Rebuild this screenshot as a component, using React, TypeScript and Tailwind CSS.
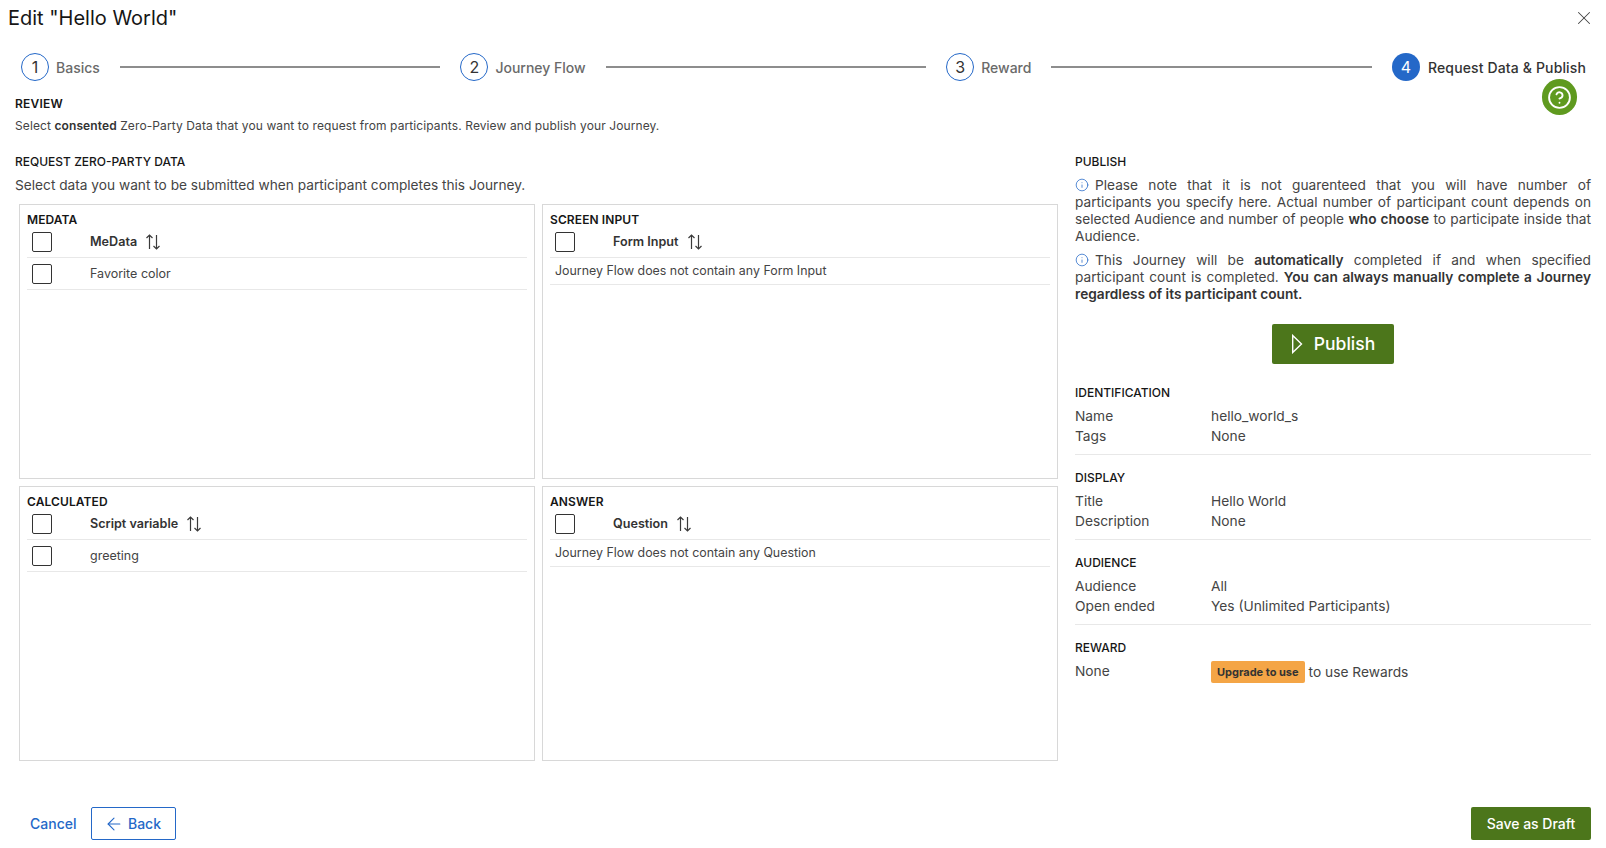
import React from "react";
import { ArrowLeft, CircleHelp, Info, X } from "lucide-react";

function Sort() {
  return (
    <svg width="16" height="18" viewBox="0 0 16 18" fill="none" stroke="#3a3a3a" strokeWidth="1.2" className="ml-2">
      <path d="M4.5 16V2M1.5 5l3-3 3 3" />
      <path d="M11.5 2v14M8.5 13l3 3 3-3" />
    </svg>
  );
}

function Step({ n, label, active }: { n: number; label: string; active?: boolean }) {
  return (
    <div className="flex items-center shrink-0">
      <div
        className={
          active
            ? "w-[28px] h-[28px] rounded-full bg-[#2468c8] text-white flex items-center justify-center text-[16px]"
            : "w-[28px] h-[28px] rounded-full border border-[#2468c8] text-[#333] flex items-center justify-center text-[16px]"
        }
      >
        {n}
      </div>
      <span
        className={
          active
            ? "ml-[8px] text-[14px] font-medium text-[#333] tracking-[0.14px]"
            : "ml-[7px] text-[14px] font-medium text-[#6a6a6a]"
        }
      >
        {label}
      </span>
    </div>
  );
}

function Box() {
  return <div className="w-[20px] h-[20px] border border-[#333] rounded-[2px] bg-white shrink-0" />;
}

function Panel({ title, col, row, empty }: { title: string; col: string; row?: string; empty?: string }) {
  return (
    <div className="border border-[#d8d8d8] h-[275px] px-[7px] pt-[7px]">
      <div className="text-[12px] leading-[15px] font-semibold text-[#161616] tracking-[0.1px]">{title}</div>
      <div className="flex items-center h-[31px] border-b border-[#e8e8e8] pl-[5px]">
        <Box />
        <div className="ml-[38px] flex items-center text-[12.6px] font-semibold text-[#333]">
          {col}
          <Sort />
        </div>
      </div>
      {row ? (
        <div className="flex items-center h-[32px] border-b border-[#e8e8e8] pl-[5px]">
          <Box />
          <div className="ml-[38px] pt-[2px] text-[12.5px] text-[#444]">{row}</div>
        </div>
      ) : (
        <div className="flex items-center h-[27px] border-b border-[#e8e8e8] pl-[5px] text-[12.4px] text-[#444]">{empty}</div>
      )}
    </div>
  );
}

function Heading({ children }: { children: React.ReactNode }) {
  return <div className="text-[12px] leading-[16px] font-medium text-[#161616]">{children}</div>;
}

function Row({ k, v }: { k: string; v: string }) {
  return (
    <div className="flex h-[20px] items-center text-[13.75px] text-[#444]">
      <div className="w-[136px]">{k}</div>
      <div>{v}</div>
    </div>
  );
}

export default function App() {
  return (
    <div className="relative w-[1606px] h-[848px] bg-white overflow-hidden text-[#333] font-['Inter',sans-serif]">
      <div className="flex items-center justify-between pl-[8px] pr-[11px] h-[36px]">
        <h1 className="text-[20px] leading-[26px] text-[#161616]">Edit "Hello World"</h1>
        <X size={22} strokeWidth={1.1} className="text-[#444]" />
      </div>

      <div className="flex items-center pl-[21px] pr-[20px] mt-[16px] h-[30px]">
        <Step n={1} label="Basics" />
        <div className="flex-1 h-[2px] bg-[#8d8d8d] mx-[20px]" />
        <Step n={2} label="Journey Flow" />
        <div className="flex-1 h-[2px] bg-[#8d8d8d] mx-[20px]" />
        <Step n={3} label="Reward" />
        <div className="flex-1 h-[2px] bg-[#8d8d8d] mx-[20px]" />
        <Step n={4} label="Request Data & Publish" active />
      </div>

      <div className="absolute left-[1542px] top-[79px] w-[35px] h-[36px] rounded-full bg-[#5f9a1f] flex items-center justify-center">
        <CircleHelp size={25} strokeWidth={1.8} className="text-white" />
      </div>

      <div className="pl-[15px] mt-[14px]">
        <div className="text-[12px] leading-[16px] font-semibold text-[#161616] tracking-[0.2px]">REVIEW</div>
        <p className="mt-[6px] text-[12px] leading-[16px] text-[#444] tracking-[0.1px]">
          Select <b className="font-semibold text-[#333]">consented</b> Zero-Party Data that you want to request from participants. Review and publish your Journey.
        </p>
      </div>

      <div className="flex pl-[15px] pr-[15px] mt-[20px]">
        <div className="w-[1043px] shrink-0">
          <Heading>REQUEST ZERO-PARTY DATA</Heading>
          <p className="mt-[6px] text-[13.7px] leading-[18px] text-[#444]">Select data you want to be submitted when participant completes this Journey.</p>
          <div className="ml-[4px] mt-[10px] grid grid-cols-[516px_516px] gap-x-[7px] gap-y-[7px]">
            <Panel title="MEDATA" col="MeData" row="Favorite color" />
            <Panel title="SCREEN INPUT" col="Form Input" empty="Journey Flow does not contain any Form Input" />
            <Panel title="CALCULATED" col="Script variable" row="greeting" />
            <Panel title="ANSWER" col="Question" empty="Journey Flow does not contain any Question" />
          </div>
        </div>

        <div className="ml-[17px] flex-1">
          <Heading>PUBLISH</Heading>
          <p className="mt-[7px] text-[13.7px] leading-[17px] text-[#444] text-justify">
            <Info size={14} strokeWidth={1.3} className="inline-block text-[#2468c8] mr-[6px] -mt-[3px]" />
            Please note that it is not guarenteed that you will have number of participants you specify here. Actual number of participant count depends on selected Audience and number of people <b className="font-semibold text-[#333]">who choose</b> to participate inside that Audience.
          </p>
          <p className="mt-[7px] text-[13.7px] leading-[17px] text-[#444] text-justify">
            <Info size={14} strokeWidth={1.3} className="inline-block text-[#2468c8] mr-[6px] -mt-[3px]" />
            This Journey will be <b className="font-semibold text-[#333]">automatically</b> completed if and when specified participant count is completed. <b className="font-semibold text-[#333]">You can always manually complete a Journey regardless of its participant count.</b>
          </p>
          <div className="flex justify-center mt-[21px]">
            <button className="w-[122px] h-[40px] bg-[#4c761b] rounded-[2px] text-white text-[17.5px] font-medium flex items-center justify-center">
              <svg width="12" height="20" viewBox="0 0 12 20" fill="none" stroke="#fff" strokeWidth="1.4" className="mr-[11px]">
                <path d="M1.7 1.5 10.5 10l-8.8 8.5z" />
              </svg>
              Publish
            </button>
          </div>

          <div className="mt-[21px]"><Heading>IDENTIFICATION</Heading></div>
          <div className="mt-[5px]">
            <Row k="Name" v="hello_world_s" />
            <Row k="Tags" v="None" />
          </div>
          <div className="h-px bg-[#e8e8e8] mt-[8px]" />

          <div className="mt-[15px]"><Heading>DISPLAY</Heading></div>
          <div className="mt-[5px]">
            <Row k="Title" v="Hello World" />
            <Row k="Description" v="None" />
          </div>
          <div className="h-px bg-[#e8e8e8] mt-[8px]" />

          <div className="mt-[15px]"><Heading>AUDIENCE</Heading></div>
          <div className="mt-[5px]">
            <Row k="Audience" v="All" />
            <Row k="Open ended" v="Yes (Unlimited Participants)" />
          </div>
          <div className="h-px bg-[#e8e8e8] mt-[8px]" />

          <div className="mt-[15px]"><Heading>REWARD</Heading></div>
          <div className="flex mt-[5px] text-[13.75px] text-[#444]">
            <div className="w-[136px] leading-[20px]">None</div>
            <div className="flex items-center">
              <span className="h-[22px] px-[6px] flex items-center bg-[#f4a546] rounded-[2px] text-[11px] font-bold text-[#333]">Upgrade to use</span>
              <span className="ml-[4px]">to use Rewards</span>
            </div>
          </div>
        </div>
      </div>

      <div className="absolute left-0 right-0 bottom-[8px] flex items-center justify-between pl-[30px] pr-[15px]">
        <div className="flex items-center">
          <span className="text-[14px] font-medium text-[#2468c8]">Cancel</span>
          <button className="ml-[15px] w-[85px] h-[33px] border border-[#2468c8] rounded-[2px] pr-[3px] text-[#2468c8] text-[14px] font-medium flex items-center justify-center">
            <ArrowLeft size={20} strokeWidth={1.3} className="mr-[4px]" />
            Back
          </button>
        </div>
        <button className="w-[120px] h-[33px] bg-[#4c761b] rounded-[2px] text-white text-[14px] font-medium">Save as Draft</button>
      </div>
    </div>
  );
}
